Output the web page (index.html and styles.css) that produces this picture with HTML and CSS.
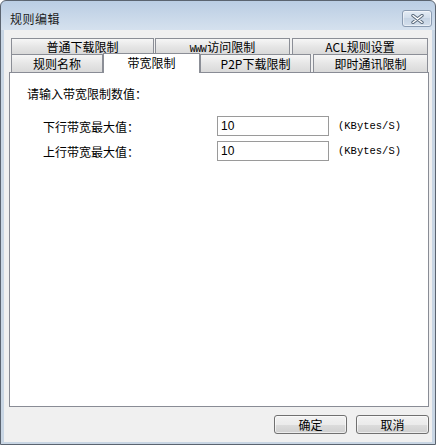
FILE: index.html
```html
<!DOCTYPE html>
<html lang="zh-CN">
<head>
  <meta charset="UTF-8">
  <title>规则编辑</title>
  <link rel="stylesheet" href="styles.css">
</head>
<body>
<div class="window">
  <div class="titlebar">
    <span class="title">规则编辑</span>
    <a href="#" class="close">
      <svg width="13" height="10" viewBox="0 0 13 10">
        <path d="M2 1.5 L11 8.5 M11 1.5 L2 8.5" stroke="#58687a" stroke-width="3.4" stroke-linecap="round"/>
        <path d="M2 1.5 L11 8.5 M11 1.5 L2 8.5" stroke="#fff" stroke-width="1.5" stroke-linecap="round"/>
      </svg>
    </a>
  </div>
  <div class="client">
    <div class="tabs">
      <ul class="tab-row back">
        <li class="tab w143">普通下载限制</li>
        <li class="tab w135 gap1"><span class="www">WWW</span>访问限制</li>
        <li class="tab w136 gap2">ACL规则设置</li>
      </ul>
      <ul class="tab-row front">
        <li class="tab w92">规则名称</li>
        <li class="tab w97 current">带宽限制</li>
        <li class="tab w111">P2P下载限制</li>
        <li class="tab w115 gap2">即时通讯限制</li>
      </ul>
    </div>
    <div class="panel">
      <p class="hint">请输入带宽限制数值：</p>
      <div class="field">
        <label class="label">下行带宽最大值：</label>
        <input class="input" type="text" value="10">
        <span class="unit">(KBytes/S)</span>
      </div>
      <div class="field">
        <label class="label">上行带宽最大值：</label>
        <input class="input" type="text" value="10">
        <span class="unit">(KBytes/S)</span>
      </div>
    </div>
    <div class="footer">
      <button class="btn">确定</button>
      <button class="btn">取消</button>
    </div>
  </div>
</div>
</body>
</html>
```

FILE: styles.css
```css
* {
  margin: 0;
  padding: 0;
  box-sizing: border-box;
}

body {
  font-family: "Noto Sans CJK SC", "Noto Sans", sans-serif;
  font-size: 12px;
  color: #000;
  background: #fff;
}

li {
  list-style: none;
}

.window {
  width: 436px;
  height: 445px;
  border: 1px solid #5b6470;
  border-radius: 6px 6px 0 0;
  background: linear-gradient(#bacde3, #d5e1ee 29px, #c9d6e4 29px);
  padding: 0 3px 2px;
  display: flex;
  flex-direction: column;
}

.titlebar {
  height: 29px;
  padding: 6px 0 0 6px;
  display: flex;
  align-items: center;
  justify-content: space-between;
}

.title {
  font-size: 12px;
  color: #1b1b1b;
  letter-spacing: 0.5px;
}

.close {
  width: 30px;
  height: 17px;
  border: 1px solid #8a9bb1;
  border-radius: 3px;
  background: linear-gradient(#e4ecf5, #d0dcea 50%, #c6d4e4 50%, #d3dfec);
  display: flex;
  align-items: center;
  justify-content: center;
  box-shadow: inset 0 0 0 1px rgba(255, 255, 255, .5);
}

.client {
  flex: 1;
  background: #f0f0f0;
  padding: 8px 0 0 5px;
  display: flex;
  flex-direction: column;
}

.tabs {
  padding-left: 2px;
}

.tab-row {
  display: flex;
  align-items: flex-end;
}

.tab {
  border: 1px solid #8b8e96;
  border-bottom: none;
  background: linear-gradient(#f6f6f6, #e6e6e6 50%, #d9d9d9);
  text-align: center;
  font-size: 12px;
  line-height: 14px;
  white-space: nowrap;
}

.back .tab {
  height: 16px;
  line-height: 15px;
}

.front .tab {
  height: 18px;
  line-height: 17px;
}

.front .tab.current {
  height: 20px;
  margin-top: -1px;
  margin-bottom: -1px;
  background: #fff;
  position: relative;
  z-index: 1;
  line-height: 17px;
}

.www {
  font-family: "Liberation Mono", monospace;
  font-size: 10px;
  letter-spacing: -0.5px;
  margin-right: 1px;
}

.w92 { width: 92px; }
.w97 { width: 97px; }
.w111 { width: 111px; }
.w115 { width: 115px; }
.w135 { width: 135px; }
.w136 { width: 136px; }
.w143 { width: 143px; }
.gap1 { margin-left: 1px; }
.gap2 { margin-left: 2px; }

.panel {
  width: 420px;
  height: 335px;
  border: 1px solid #898c95;
  background: #fff;
  padding: 13px 0 0 17px;
}

.hint {
  line-height: 16px;
  margin-bottom: 14px;
}

.field {
  display: flex;
  align-items: center;
  height: 20px;
  margin-bottom: 5px;
}

.label {
  width: 190px;
  padding-left: 16px;
}

.input {
  width: 112px;
  height: 20px;
  border: 1px solid #9a9a9a;
  font-family: "Liberation Sans", Arial, sans-serif;
  font-size: 12px;
  padding-left: 3px;
  outline: none;
}

.unit {
  margin-left: 9px;
  font-family: "Liberation Mono", monospace;
  font-size: 10.5px;
}

.footer {
  width: 420px;
  display: flex;
  justify-content: flex-end;
  gap: 9px;
  margin-top: 8px;
}

.btn {
  width: 73px;
  height: 19px;
  border: 1px solid #707070;
  border-radius: 3px;
  background: linear-gradient(#f2f2f2, #ebebeb 50%, #dddddd 50%, #cfcfcf);
  box-shadow: inset 0 0 0 1px rgba(255, 255, 255, .6);
  font-family: "Noto Sans CJK SC", sans-serif;
  font-size: 12px;
  line-height: 16px;
  color: #000;
}
```
